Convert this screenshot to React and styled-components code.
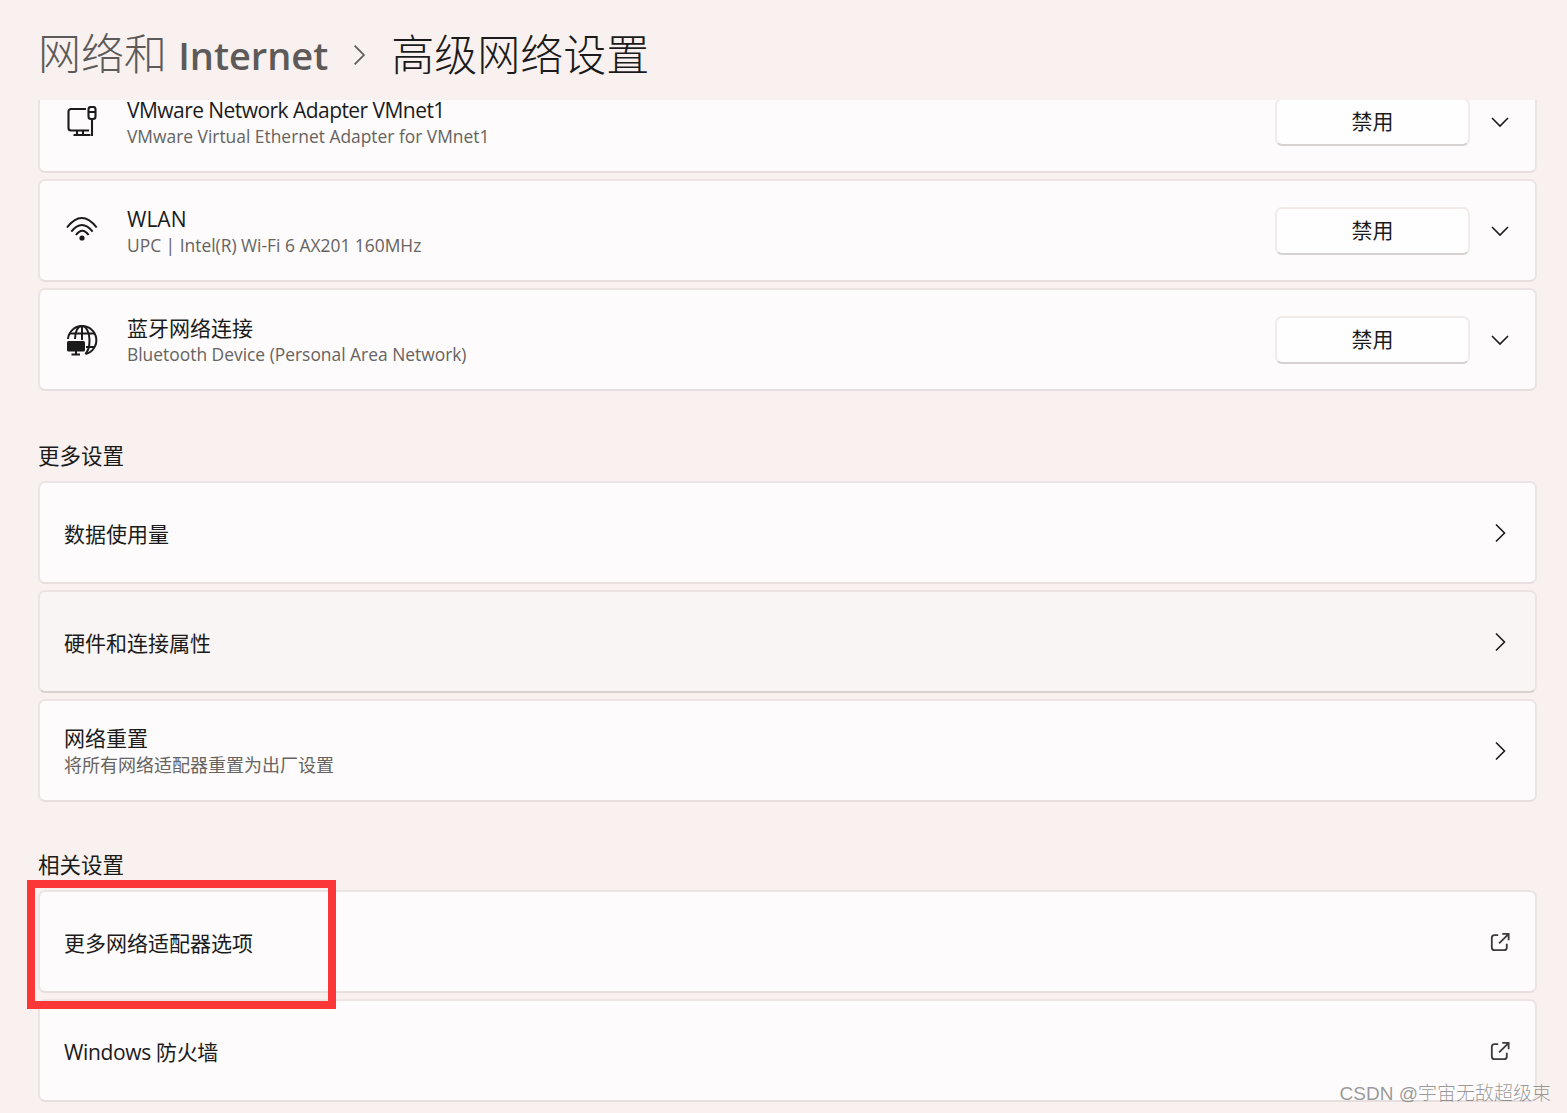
import React from "react";
import styled, { createGlobalStyle } from "styled-components";

const FONT = `"Open Sans", "Noto Sans CJK SC", sans-serif`;

const GlobalStyle = createGlobalStyle`
  html, body {
    margin: 0;
    padding: 0;
    background: #f9f1ef;
  }
  * {
    box-sizing: border-box;
  }
`;

const Page = styled.div`
  position: relative;
  width: 1567px;
  height: 1113px;
  overflow: hidden;
  background: #f9f1ef;
  font-family: ${FONT};
  color: #1b1b1b;
`;

const Header = styled.header`
  height: 100px;
  padding: 9px 0 0 38px;
  display: flex;
  align-items: center;
  font-size: 43px;
  line-height: 56px;
  font-weight: 300;
`;

const Crumb = styled.span`
  color: #5d5a59;
  b {
    font-weight: 600;
    font-size: 38px;
  }
`;

const Sep = styled.span`
  width: 63px;
  padding-left: 19px;
  display: flex;
  color: #5d5a59;
`;

const Current = styled.span`
  color: #1b1b1b;
`;

const Scroller = styled.main`
  height: 1013px;
  padding: 0 30px 0 38px;
  overflow: hidden;
`;

const List = styled.div`
  display: flex;
  flex-direction: column;
  gap: 6px;
  margin-top: ${(p) => p.$offset || 0}px;
`;

const Card = styled.div`
  height: 103px;
  padding: 0 24px 0 24px;
  display: flex;
  align-items: center;
  border-radius: 7px;
  border: 2px solid #ece4e2;
  background: ${(p) => (p.$hover ? "#f8f5f4" : "#fdfbfb")};
  border-bottom-color: ${(p) => (p.$hover ? "#d9d1cf" : "#e7dfdd")};
`;

const IconBox = styled.div`
  width: 63px;
  padding-left: 2px;
  flex: none;
  display: flex;
`;

const Texts = styled.div`
  flex: 1;
  min-width: 0;
  padding-top: 2px;
`;

const Title = styled.div`
  font-size: 21px;
  line-height: 26px;
  letter-spacing: ${(p) => p.$spacing || 0}px;
  color: #1b1b1b;
`;

const Sub = styled.div`
  margin-top: ${(p) => (p.$cjk ? "0" : "1px")};
  font-size: ${(p) => (p.$cjk ? "18px" : "17.4px")};
  line-height: ${(p) => (p.$cjk ? "28px" : "24px")};
  color: #666361;
`;

const DisableButton = styled.button`
  width: 195px;
  height: 48px;
  margin-right: 19px;
  padding: 0 0 3px;
  flex: none;
  border-radius: 7px;
  border: 2px solid #f1ecea;
  border-bottom-color: #d6d2d1;
  background: #fffefe;
  font-family: ${FONT};
  font-size: 21px;
  color: #1b1b1b;
`;

const Trailing = styled.div`
  width: 22px;
  flex: none;
  display: flex;
  justify-content: center;
  color: #1b1b1b;
`;

const SectionTitle = styled.h2`
  margin: 0;
  height: ${(p) => p.$height}px;
  padding-top: ${(p) => p.$height - 42}px;
  font-size: 21.5px;
  line-height: 34px;
  font-weight: 400;
  color: #1b1b1b;
`;

const Marker = styled.div`
  position: absolute;
  left: 27px;
  top: 880px;
  width: 309px;
  height: 129px;
  border: 8px solid #fb3737;
  pointer-events: none;
`;

const Watermark = styled.div`
  position: absolute;
  right: 16px;
  bottom: 6px;
  font-family: "Liberation Sans", "Noto Sans CJK SC", sans-serif;
  font-size: 19px;
  line-height: 26px;
  font-weight: 300;
  color: rgba(70, 70, 70, 0.55);
`;

const ChevronRight = ({ size = 22 }) => (
  <svg width={size} height={size} viewBox="0 0 22 22" fill="none" stroke="currentColor" strokeWidth="1.6">
    <path d="M7 2.500 15.500 11 7 19.500" />
  </svg>
);

const ChevronDown = () => (
  <svg width="22" height="22" viewBox="0 0 22 22" fill="none" stroke="currentColor" strokeWidth="1.6">
    <path d="M3 7 11 15 19 7" />
  </svg>
);

const ExternalLink = () => (
  <svg width="20" height="20" viewBox="0 0 22 22" fill="none" stroke="#3c3c3c" strokeWidth="2">
    <path d="M9 3.500H5a3 3 0 0 0-3 3V17a3 3 0 0 0 3 3h10.500a3 3 0 0 0 3-3v-4" />
    <path d="M10 12.500 20 2.500M13.500 2h7v7" />
  </svg>
);

const AdapterIcon = () => (
  <svg width="32" height="32" viewBox="0 0 32 32" fill="none" stroke="#1b1b1b" strokeWidth="2.100">
    <path d="M20 3H5A2.500 2.500 0 0 0 2.500 5.500v16.500A2.500 2.500 0 0 0 5 24.500h18" />
    <path d="M7.500 29h17M11 24.500V29M17 24.500V29" />
    <rect x="22.500" y="1" width="7" height="12" rx="2.500" />
    <path d="M22.500 6h7M26 13v17" />
  </svg>
);

const WifiIcon = () => (
  <svg width="32" height="32" viewBox="0 0 32 32" fill="none" stroke="#1b1b1b" strokeWidth="2">
    <path d="M1 12.500Q15.800-6.500 30.700 12.500" />
    <path d="M5.300 16.700Q16 3.500 26.600 16.700" />
    <path d="M10 20Q16.300 11.500 22.600 20" />
    <circle cx="16" cy="23" r="2.600" fill="#1b1b1b" stroke="none" />
  </svg>
);

const GlobeIcon = () => (
  <svg width="32" height="32" viewBox="0 0 32 32" fill="none" stroke="#1b1b1b" strokeWidth="2">
    <path d="M2 15A14.200 14.200 0 1 1 19.500 30" />
    <path d="M9 15C9 7 12 2 16 2s7.500 6 7.500 14-1.500 10.500-4 14" />
    <path d="M3.500 9.500h25M20 23h9M16 2v14" />
    <rect x="1" y="17" width="18" height="10.500" rx="1.500" fill="#1b1b1b" stroke="none" />
    <path d="M10 27v3M5.500 30.500h8.500" />
  </svg>
);

const adapters = [
  { icon: <AdapterIcon />, name: "VMware Network Adapter VMnet1", desc: "VMware Virtual Ethernet Adapter for VMnet1", spacing: -0.55 },
  { icon: <WifiIcon />, name: "WLAN", desc: "UPC | Intel(R) Wi-Fi 6 AX201 160MHz" },
  { icon: <GlobeIcon />, name: "蓝牙网络连接", desc: "Bluetooth Device (Personal Area Network)" },
];

const moreSettings = [
  { name: "数据使用量" },
  { name: "硬件和连接属性", hover: true },
  { name: "网络重置", desc: "将所有网络适配器重置为出厂设置" },
];

const relatedSettings = [
  { name: "更多网络适配器选项" },
  { name: "Windows 防火墙", spacing: -0.35 },
];

export default function App() {
  return (
    <Page>
      <GlobalStyle />
      <Header>
        <Crumb>
          网络和 <b>Internet</b>
        </Crumb>
        <Sep>
          <ChevronRight size={24} />
        </Sep>
        <Current>高级网络设置</Current>
      </Header>
      <Scroller>
        <List $offset={-30}>
          {adapters.map((a) => (
            <Card key={a.name}>
              <IconBox>{a.icon}</IconBox>
              <Texts>
                <Title $spacing={a.spacing}>{a.name}</Title>
                <Sub>{a.desc}</Sub>
              </Texts>
              <DisableButton>禁用</DisableButton>
              <Trailing>
                <ChevronDown />
              </Trailing>
            </Card>
          ))}
        </List>
        <SectionTitle $height={90}>更多设置</SectionTitle>
        <List>
          {moreSettings.map((s) => (
            <Card key={s.name} $hover={s.hover}>
              <Texts>
                <Title>{s.name}</Title>
                {s.desc && <Sub $cjk>{s.desc}</Sub>}
              </Texts>
              <Trailing>
                <ChevronRight />
              </Trailing>
            </Card>
          ))}
        </List>
        <SectionTitle $height={88}>相关设置</SectionTitle>
        <List>
          {relatedSettings.map((s) => (
            <Card key={s.name}>
              <Texts>
                <Title $spacing={s.spacing}>{s.name}</Title>
              </Texts>
              <Trailing>
                <ExternalLink />
              </Trailing>
            </Card>
          ))}
        </List>
      </Scroller>
      <Marker />
      <Watermark>CSDN @宇宙无敌超级束</Watermark>
    </Page>
  );
}
